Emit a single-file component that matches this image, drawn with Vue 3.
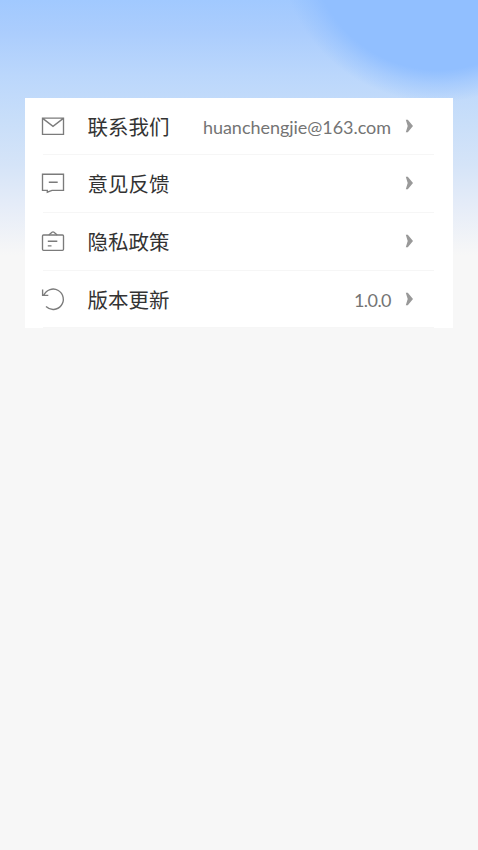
<script setup>
const items = [
  { icon: 'mail', label: '联系我们', value: 'huanchengjie@163.com' },
  { icon: 'feedback', label: '意见反馈', value: '' },
  { icon: 'policy', label: '隐私政策', value: '' },
  { icon: 'update', label: '版本更新', value: '1.0.0', short: true },
]
</script>

<template>
  <main class="page">
    <ul class="card">
      <li v-for="item in items" :key="item.icon" class="row">
        <svg class="icon" viewBox="0 0 24 24" aria-hidden="true">
          <g v-if="item.icon === 'mail'">
            <path d="M1.5 4.1h21v16.2h-21zM2 4.6l10 7.7 10-7.7" />
          </g>
          <g v-else-if="item.icon === 'feedback'">
            <path d="M1.5 3.2h21v16.1H11l-4.7 1.9v-1.9H1.5zM7.8 11.2h8.9" />
          </g>
          <g v-else-if="item.icon === 'policy'">
            <rect x="1.5" y="6" width="21" height="15.3" rx="1" />
            <path d="M7.8 6L11 3.2q1-.7 2 0L16.2 6M6.8 12.2h9.5M6.8 16.8h3.7" />
          </g>
          <g v-else>
            <path d="M2.8 8.1A10.2 10.2 0 1 1 5 19.6M1.6 2.6v5.7h5.7" />
          </g>
        </svg>
        <span class="label">{{ item.label }}</span>
        <span class="value" :class="{ short: item.short }">{{ item.value }}</span>
        <svg class="arrow" viewBox="0 0 8 14" aria-hidden="true">
          <path d="M.8.8H2.8L8 7 2.8 13.2H.8L2.7 7z" />
        </svg>
      </li>
    </ul>
  </main>
</template>

<style>
body {
  background: #f7f7f7;
}
</style>

<style scoped>
.page {
  box-sizing: border-box;
  min-height: 850px;
  padding: 98px 25px 0;
  background:
    radial-gradient(circle at 438px -58px, #91bfff 0, #91bfff 128px, rgba(145, 191, 255, .5) 142px, rgba(145, 191, 255, 0) 160px) 0 0 / 100% 260px no-repeat,
    linear-gradient(180deg, #a1c9ff 0, #abcdfd 32px, #bbd7fc 76px, #c8def9 120px, #d5e4f8 165px, #e5ecf8 205px, #f7f7f7 255px);
  font-family: "Noto Sans", "Noto Sans CJK SC", sans-serif;
}

.card {
  display: grid;
  grid-template-rows: 57px 58px 58px 57px;
  margin: 0;
  padding: 0;
  list-style: none;
  background: #fff;
}

.row {
  position: relative;
  display: flex;
  align-items: center;
  padding: 0 40px 1.2px 16px;
}

.row::after {
  content: "";
  position: absolute;
  right: 19px;
  bottom: 0;
  left: 18px;
  height: 1px;
  background: #f6f6f6;
}

.icon {
  flex: none;
  width: 24px;
  height: 24px;
  fill: none;
  stroke: #7b7b7b;
  stroke-width: 1.35;
}

.label {
  margin-left: 22.5px;
  color: #333;
  font-family: "Noto Sans CJK SC", sans-serif;
  font-size: 20.5px;
  line-height: 30px;
}

.value {
  margin-left: auto;
  padding-top: 2px;
  color: #747474;
  font-family: Lato, sans-serif;
  font-size: 18px;
  line-height: 24px;
  letter-spacing: -0.04px;
  white-space: nowrap;
}

.short {
  letter-spacing: -0.55px;
}

.arrow {
  flex: none;
  width: 8px;
  height: 14px;
  margin-left: 14px;
  fill: #999;
}
</style>
